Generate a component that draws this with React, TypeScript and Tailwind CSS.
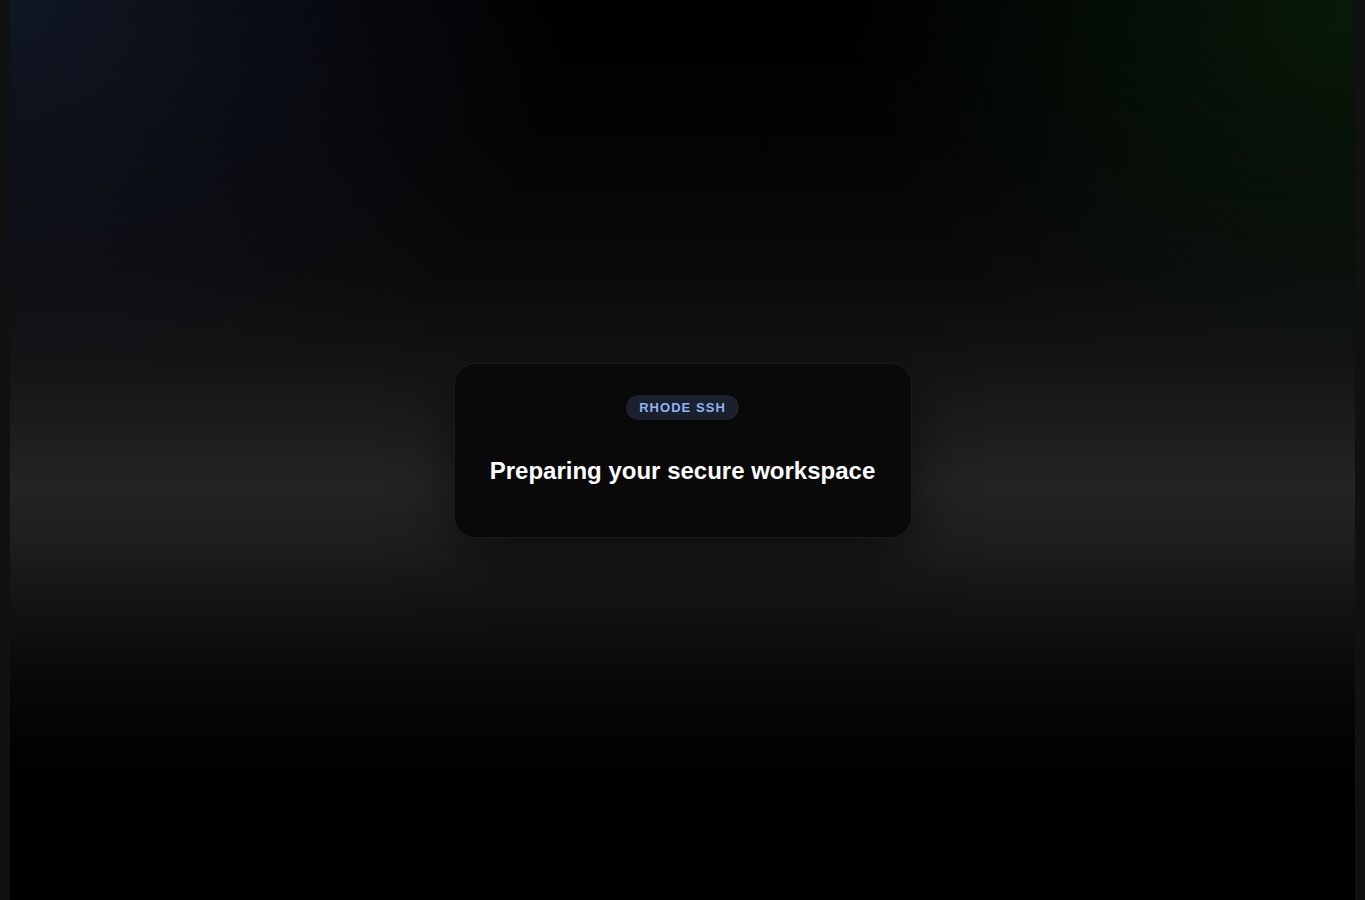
import React from "react";

export default function App() {
  return (
    <div className="min-h-[900px] w-full bg-[#111111] px-[10px] font-['Liberation_Sans',Arial,sans-serif]">
      <div className="flex h-[900px] w-full items-center justify-center bg-[image:radial-gradient(ellipse_560px_430px_at_0%_0%,rgba(24,32,52,0.7),rgba(24,32,52,0)),radial-gradient(ellipse_500px_420px_at_100%_0%,rgba(12,40,16,0.65),rgba(12,40,16,0)),linear-gradient(to_bottom,#000000_0%,#030303_15%,#0a0a0a_30%,#131313_40%,#1e1e1e_49%,#242424_54%,#1e1e1e_60%,#121212_68%,#070707_77%,#010101_85%,#000000_90%,#000000_100%)]">
        <div className="flex w-[458px] flex-col items-center rounded-[22px] border border-[#1a1a1a] bg-[#090909] pb-[50px] pt-[31px] shadow-[0_20px_60px_rgba(0,0,0,0.55)]">
          <span className="rounded-full bg-[#1a202c] px-[13px] py-[4px] text-[13px] font-bold uppercase leading-[17px] tracking-[0.08em] text-[#8cb4f5]">
            Rhode SSH
          </span>
          <h1 className="mt-[35px] text-[24px] font-bold leading-[32px] text-white">
            Preparing your secure workspace
          </h1>
        </div>
      </div>
    </div>
  );
}
